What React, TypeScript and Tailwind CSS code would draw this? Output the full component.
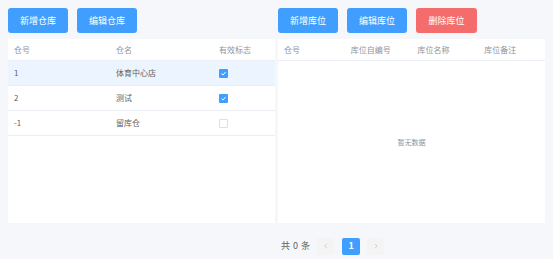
import { ReactNode } from "react";

const font = { fontFamily: '"Noto Sans CJK SC", "Liberation Sans", sans-serif' };

function Btn({ children, danger }: { children: ReactNode; danger?: boolean }) {
  return (
    <button
      className={
        danger
          ? "w-[61px] h-[25px] rounded-[3px] bg-[#f56c6c] text-white text-[9px] flex items-center justify-center"
          : "w-[60px] h-[25px] rounded-[3px] bg-[#409eff] text-white text-[9px] flex items-center justify-center"
      }
    >
      {children}
    </button>
  );
}

function Check({ on }: { on: boolean }) {
  if (!on) {
    return <span className="block w-[9px] h-[9px] rounded-[1px] border border-[#dcdfe6] bg-white" />;
  }
  return (
    <span className="flex w-[9px] h-[9px] rounded-[1px] bg-[#409eff] items-center justify-center">
      <svg width="7" height="7" viewBox="0 0 7 7">
        <path d="M1.5 3.6 L3 5 L5.6 2" stroke="white" strokeWidth="1" fill="none" />
      </svg>
    </span>
  );
}

const warehouses = [
  { no: "1", name: "体育中心店", valid: true },
  { no: "2", name: "测试", valid: true },
  { no: "-1", name: "留库仓", valid: false },
];

export default function App() {
  return (
    <div className="w-[553px] h-[259px] bg-[#f5f7fa] px-2 pt-2" style={font}>
      <div className="flex gap-[3px]">
        {/* 仓库 */}
        <div className="w-[267px]">
          <div className="flex gap-[9px]">
            <Btn>新增仓库</Btn>
            <Btn>编辑仓库</Btn>
          </div>
          <div className="mt-[6px] h-[184px] bg-white">
            <div className="flex h-[22px] items-center text-[8px] text-[#909399] border-b border-[#ebeef5]">
              <div className="w-[102px] px-[6px]">仓号</div>
              <div className="w-[103px] px-[6px]">仓名</div>
              <div className="flex-1 px-[6px]">有效标志</div>
            </div>
            {warehouses.map((w, i) => (
              <div
                key={w.no}
                className={
                  i === 0
                    ? "flex h-[25px] items-center text-[8px] text-[#606266] border-b border-[#ebeef5] bg-[#ecf5ff]"
                    : "flex h-[25px] items-center text-[8px] text-[#606266] border-b border-[#ebeef5]"
                }
              >
                <div className="w-[102px] px-[6px]">{w.no}</div>
                <div className="w-[103px] px-[6px]">{w.name}</div>
                <div className="flex-1 px-[6px]">
                  <Check on={w.valid} />
                </div>
              </div>
            ))}
          </div>
        </div>

        {/* 库位 */}
        <div className="w-[267px]">
          <div className="flex gap-[9px]">
            <Btn>新增库位</Btn>
            <Btn>编辑库位</Btn>
            <Btn danger>删除库位</Btn>
          </div>
          <div className="mt-[6px] h-[184px] bg-white flex flex-col">
            <div className="grid grid-cols-4 h-[22px] items-center text-[8px] text-[#909399] border-b border-[#ebeef5]">
              <div className="px-[6px]">仓号</div>
              <div className="px-[6px]">库位自编号</div>
              <div className="px-[6px]">库位名称</div>
              <div className="px-[6px]">库位备注</div>
            </div>
            <div className="flex-1 flex items-center justify-center text-[7px] text-[#909399]">
              暂无数据
            </div>
          </div>
        </div>
      </div>

      {/* 分页 */}
      <div className="mt-[14px] flex items-center pl-[273px] h-[18px]">
        <span className="flex gap-[3px] text-[9px] text-[#606266] mr-[7px]">
          <span>共</span>
          <span>0</span>
          <span>条</span>
        </span>
        <div className="w-[17px] h-[17px] bg-[#f4f4f5] rounded-[2px] flex items-center justify-center text-[#c0c4cc]">
          <svg width="6" height="6" viewBox="0 0 6 6">
            <path d="M4 0.8 L1.8 3 L4 5.2" stroke="currentColor" strokeWidth="0.8" fill="none" />
          </svg>
        </div>
        <div className="ml-[8px] w-[18px] h-[17px] bg-[#409eff] rounded-[2px] flex items-center justify-center text-white text-[9px] font-bold">
          1
        </div>
        <div className="ml-[7px] w-[17px] h-[17px] bg-[#f4f4f5] rounded-[2px] flex items-center justify-center text-[#c0c4cc]">
          <svg width="6" height="6" viewBox="0 0 6 6">
            <path d="M2 0.8 L4.2 3 L2 5.2" stroke="currentColor" strokeWidth="0.8" fill="none" />
          </svg>
        </div>
      </div>
    </div>
  );
}
